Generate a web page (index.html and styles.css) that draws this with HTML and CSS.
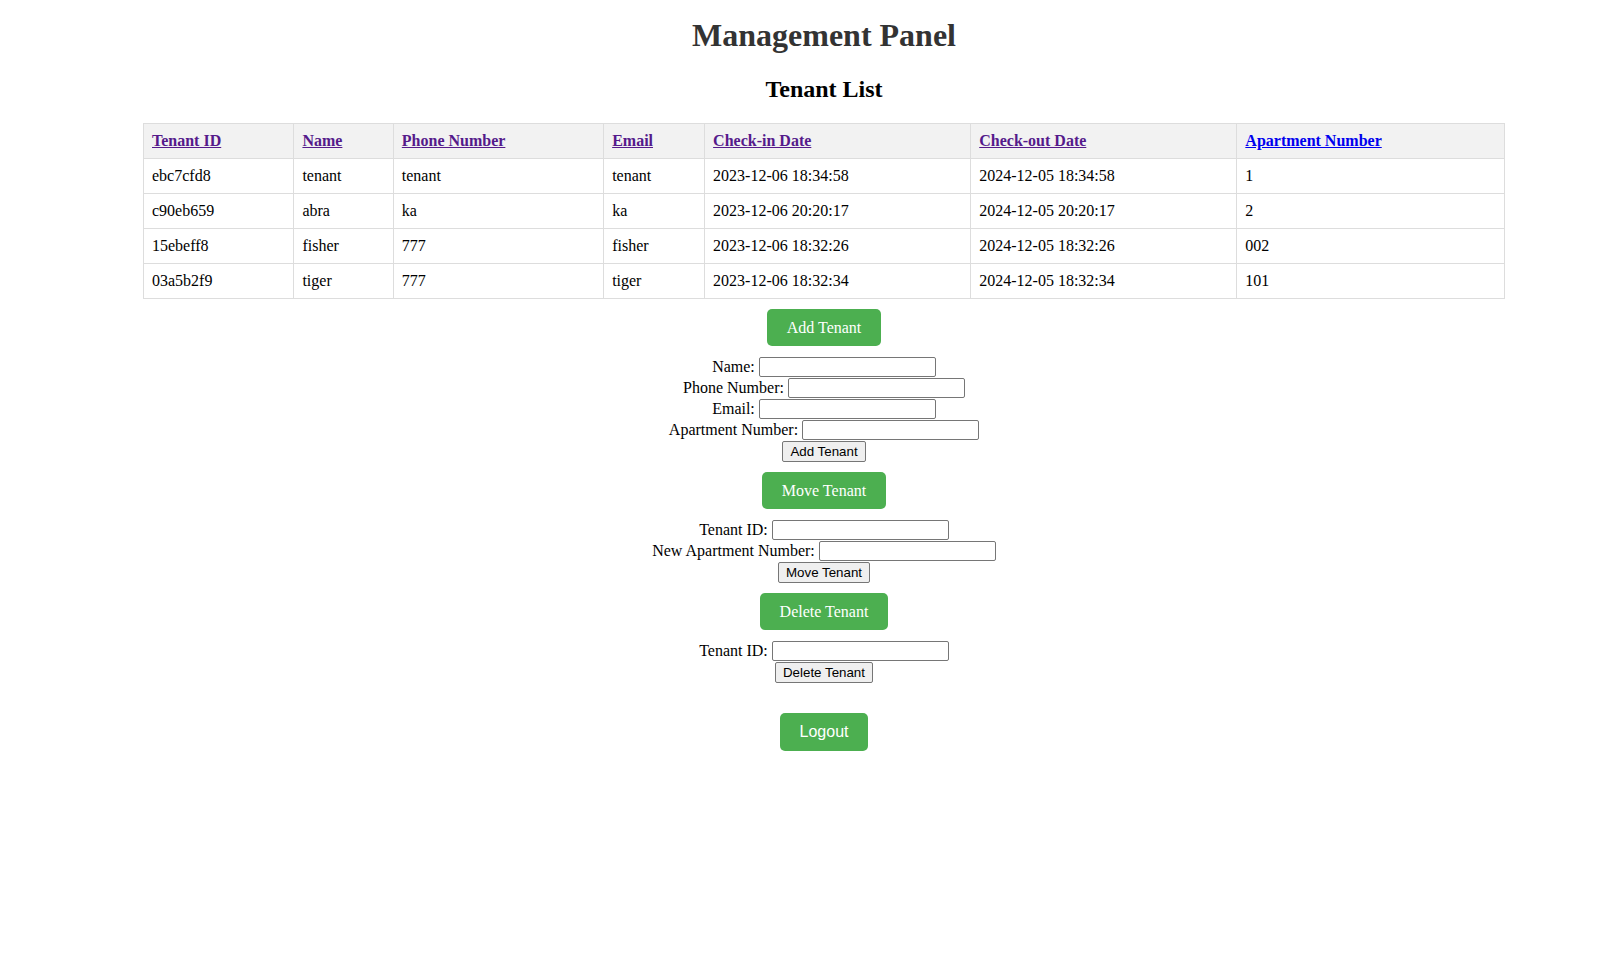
FILE: index.html
```html
<!DOCTYPE html>
<html lang="en">
<head>
<meta charset="utf-8">
<title>Management Panel</title>
<link rel="stylesheet" href="styles.css">
</head>
<body>
<div class="page">
  <h1 class="title">Management Panel</h1>
  <h2 class="subtitle">Tenant List</h2>
  <table class="tenants">
    <thead>
      <tr>
        <th><a class="sort visited" href="#">Tenant ID</a></th>
        <th><a class="sort visited" href="#">Name</a></th>
        <th><a class="sort visited" href="#">Phone Number</a></th>
        <th><a class="sort visited" href="#">Email</a></th>
        <th><a class="sort visited" href="#">Check-in Date</a></th>
        <th><a class="sort visited" href="#">Check-out Date</a></th>
        <th><a class="sort" href="#">Apartment Number</a></th>
      </tr>
    </thead>
    <tbody>
      <tr><td>ebc7cfd8</td><td>tenant</td><td>tenant</td><td>tenant</td><td>2023-12-06 18:34:58</td><td>2024-12-05 18:34:58</td><td>1</td></tr>
      <tr><td>c90eb659</td><td>abra</td><td>ka</td><td>ka</td><td>2023-12-06 20:20:17</td><td>2024-12-05 20:20:17</td><td>2</td></tr>
      <tr><td>15ebeff8</td><td>fisher</td><td>777</td><td>fisher</td><td>2023-12-06 18:32:26</td><td>2024-12-05 18:32:26</td><td>002</td></tr>
      <tr><td>03a5b2f9</td><td>tiger</td><td>777</td><td>tiger</td><td>2023-12-06 18:32:34</td><td>2024-12-05 18:32:34</td><td>101</td></tr>
    </tbody>
  </table>

  <div class="actions">
    <button class="toggle first" type="button">Add Tenant</button>
    <form class="form">
      <div class="row"><label class="lbl">Name:</label><input class="field" type="text"></div>
      <div class="row"><label class="lbl">Phone Number:</label><input class="field" type="text"></div>
      <div class="row"><label class="lbl">Email:</label><input class="field" type="text"></div>
      <div class="row"><label class="lbl">Apartment Number:</label><input class="field" type="text"></div>
      <div class="row"><button class="submit" type="button">Add Tenant</button></div>
    </form>

    <button class="toggle" type="button">Move Tenant</button>
    <form class="form">
      <div class="row"><label class="lbl">Tenant ID:</label><input class="field" type="text"></div>
      <div class="row"><label class="lbl">New Apartment Number:</label><input class="field" type="text"></div>
      <div class="row"><button class="submit" type="button">Move Tenant</button></div>
    </form>

    <button class="toggle" type="button">Delete Tenant</button>
    <form class="form">
      <div class="row"><label class="lbl">Tenant ID:</label><input class="field" type="text"></div>
      <div class="row"><button class="submit" type="button">Delete Tenant</button></div>
    </form>

    <button class="logout" type="button">Logout</button>
  </div>
</div>
</body>
</html>
```

FILE: styles.css
```css
html, body {
  margin: 0;
  padding: 0;
  background: #ffffff;
}

body {
  font-family: "Liberation Serif", "Times New Roman", serif;
  font-size: 16px;
  color: #000000;
}

.page {
  padding: 0 8px 8px 34px;
}

.title {
  margin: 17px 0 0 0;
  font-size: 32px;
  line-height: 37px;
  font-weight: bold;
  text-align: center;
  color: #333333;
}

.subtitle {
  margin: 21px 0 0 0;
  font-size: 24px;
  line-height: 28px;
  font-weight: bold;
  text-align: center;
  color: #000000;
}

.tenants {
  width: 1362px;
  margin: 20px auto 0 auto;
  border-collapse: collapse;
}

.tenants th,
.tenants td {
  border: 1px solid #dddddd;
  padding: 8px;
  text-align: left;
  line-height: 18px;
  white-space: nowrap;
}

.tenants th {
  background: #f2f2f2;
  font-weight: bold;
}

.sort {
  color: #0000ee;
  text-decoration: underline;
}

.sort.visited {
  color: #551a8b;
}

.actions {
  display: flex;
  flex-direction: column;
  align-items: center;
}

.toggle {
  margin-top: 10px;
  padding: 10px 20px;
  border: none;
  border-radius: 5px;
  background: #4caf50;
  color: #ffffff;
  font-family: "Liberation Serif", "Times New Roman", serif;
  font-size: 16px;
  line-height: 17px;
  cursor: pointer;
}

.toggle.first {
  margin-top: 10px;
}

.form {
  margin: 11px 0 0 0;
  display: flex;
  flex-direction: column;
  align-items: center;
}

.row {
  height: 21px;
  display: flex;
  justify-content: center;
  align-items: flex-start;
  gap: 4px;
}

.lbl {
  font-size: 16px;
  line-height: 18px;
  padding-top: 1px;
}

.field {
  box-sizing: border-box;
  width: 177px;
  height: 20px;
  margin: 0;
  padding: 1px 2px;
  border: 1px solid #767676;
  border-radius: 2px;
  background: #ffffff;
  font-family: "Liberation Sans", Arial, sans-serif;
  font-size: 13.333px;
}

.submit {
  box-sizing: border-box;
  height: 21px;
  margin: 0;
  padding: 1px 7px;
  border: 1px solid #767676;
  border-radius: 2px;
  background: #efefef;
  color: #000000;
  font-family: "Liberation Sans", Arial, sans-serif;
  font-size: 13.333px;
  line-height: 16px;
}

.logout {
  margin-top: 30px;
  padding: 10px 20px;
  border: none;
  border-radius: 5px;
  background: #4caf50;
  color: #ffffff;
  font-family: "Liberation Sans", Arial, sans-serif;
  font-size: 16px;
  line-height: 18px;
  cursor: pointer;
}
```
